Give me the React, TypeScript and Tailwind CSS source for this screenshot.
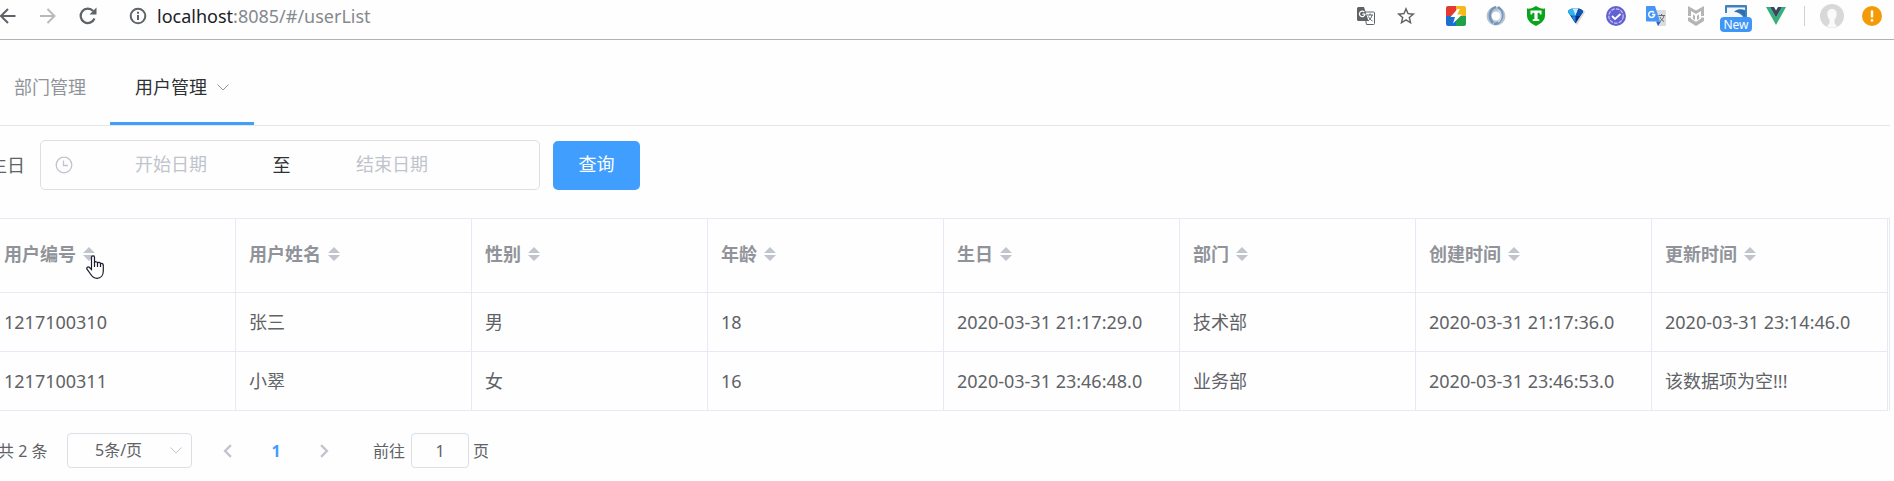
import React from "react";

type User = {
  id: string;
  name: string;
  gender: string;
  age: string;
  birthday: string;
  department: string;
  createdAt: string;
  updatedAt: string;
};

type Column = { key: keyof User; label: string };

const columns: Column[] = [
  { key: "id", label: "用户编号" },
  { key: "name", label: "用户姓名" },
  { key: "gender", label: "性别" },
  { key: "age", label: "年龄" },
  { key: "birthday", label: "生日" },
  { key: "department", label: "部门" },
  { key: "createdAt", label: "创建时间" },
  { key: "updatedAt", label: "更新时间" },
];

const users: User[] = [
  {
    id: "1217100310",
    name: "张三",
    gender: "男",
    age: "18",
    birthday: "2020-03-31 21:17:29.0",
    department: "技术部",
    createdAt: "2020-03-31 21:17:36.0",
    updatedAt: "2020-03-31 23:14:46.0",
  },
  {
    id: "1217100311",
    name: "小翠",
    gender: "女",
    age: "16",
    birthday: "2020-03-31 23:46:48.0",
    department: "业务部",
    createdAt: "2020-03-31 23:46:53.0",
    updatedAt: "该数据项为空!!!",
  },
];

function BarButton({ label, children }: { label: string; children: React.ReactNode }) {
  return (
    <button type="button" aria-label={label} className="flex h-8 w-10 shrink-0 items-center justify-center">
      {children}
    </button>
  );
}

function Chevron({ className, d }: { className: string; d: string }) {
  return (
    <svg viewBox="0 0 12 12" className={className} fill="none" stroke="currentColor">
      <path d={d} />
    </svg>
  );
}

function Extensions() {
  return (
    <div className="ml-auto flex items-center pr-0.5">
      <BarButton label="翻译此页">
        <svg viewBox="0 0 18 18" className="size-[18px]">
          <path d="M7 5h9.500a1 1 0 0 1 1 1v10.500a1 1 0 0 1-1 1H9.500z" fill="#fff" stroke="#5f6368" />
          <path d="M1.500 0H7l1 3 3.500 11H1.500A1.500 1.500 0 0 1 0 12.500v-11A1.500 1.500 0 0 1 1.500 0z" fill="#5f6368" />
          <path d="M7.300 5A2.800 2.800 0 1 0 8 7.200H5.300" fill="none" stroke="#fff" strokeWidth="1.200" />
          <path d="M10 8h6M13 6.500V8M15 8c-.5 2.500-2 4.500-4 6M11.500 9.500c.8 2 2.200 3.500 4 4.500" fill="none" stroke="#5f6368" />
        </svg>
      </BarButton>
      <BarButton label="为此网页添加书签">
        <svg viewBox="1 1 22 22" className="size-5" fill="#5f6368">
          <path d="M22 9.240l-7.190-.62L12 2 9.190 8.630 2 9.240l5.460 4.730L5.820 21 12 17.270 18.180 21l-1.630-7.030L22 9.240zM12 15.400l-3.760 2.270 1-4.280-3.320-2.880 4.380-.38L12 6.100l1.710 4.040 4.380.38-3.320 2.880 1 4.280L12 15.400z" />
        </svg>
      </BarButton>
      <div className="w-2.5" />
      <BarButton label="闪电扩展">
        <svg viewBox="0 0 20 20" className="size-5">
          <path d="M2 0h8v10H0V2a2 2 0 0 1 2-2z" fill="#e23a33" />
          <path d="M10 0h8a2 2 0 0 1 2 2v8H10z" fill="#f7b917" />
          <path d="M0 10h10v10H2a2 2 0 0 1-2-2z" fill="#1b6fd0" />
          <path d="M10 10h10v8a2 2 0 0 1-2 2h-8z" fill="#21a04b" />
          <path d="M11.500 3L4.500 11h4.500l-2 6.500 9-9h-4.800L14 3z" fill="#fff" />
        </svg>
      </BarButton>
      <BarButton label="JSON 查看器">
        <svg viewBox="0 0 20 20" className="size-5" fill="none">
          <circle cx="10" cy="10" r="7" stroke="#b4c5d8" strokeWidth="5" />
          <path d="M10 1C3 3 2 12 7 17M12 1c5 4 6 10 1 15-1 1-3 2-5 2" stroke="#7795b6" strokeWidth="2.500" />
          <path d="M12 4c4 2 4 9 0 12" stroke="#d4dfea" strokeWidth="1.500" />
        </svg>
      </BarButton>
      <BarButton label="盾牌扩展">
        <svg viewBox="0 0 20 20" className="size-5">
          <path d="M1 2.500C4 3 7 2 10 0c3 2 6 3 9 2.500v7c0 5-4 8-9 10.500C5 17.500 1 14.500 1 9.500z" fill="#09a51a" />
          <path d="M4.500 4.500h11v4h-1.300L13.300 6.800H11.600V13l1.700.4V15H6.700v-1.600l1.700-.4V6.800H6.700l-.9 1.700H4.500z" fill="#fff" />
        </svg>
      </BarButton>
      <BarButton label="宝石扩展">
        <svg viewBox="0 0 18 18" className="size-[18px]">
          <path d="M3 8l7 10L18 5l-2-2z" fill="#d4d4d4" />
          <path d="M1 5C1 0 16 0 16 5L8.500 16.500z" fill="#0a2c86" />
          <path d="M1 5c0-2 2-3 4.500-3.500L8.500 9 3.500 8.500z" fill="#27b6f2" />
          <path d="M5.500 1.500c2-.5 4-.5 6 0L8.500 9z" fill="#c2ebfd" />
          <path d="M11.500 1.500C14 2 16 3 16 5l-3 4-4.500 0z" fill="#0d56b8" />
          <path d="M4.500 9.500l4-.5v7z" fill="#168ee0" />
        </svg>
      </BarButton>
      <BarButton label="校验扩展">
        <svg viewBox="0 0 20 20" className="size-5" fill="none">
          <circle cx="10" cy="10" r="10" fill="#6361d2" />
          <circle cx="10" cy="10" r="7.200" stroke="#c5c4f3" strokeWidth="1.200" strokeDasharray="3.600 1.200" />
          <path d="M6 10l3 3 5.500-5" stroke="#fff" strokeWidth="1.800" />
        </svg>
      </BarButton>
      <BarButton label="谷歌翻译">
        <svg viewBox="0 0 20 20" className="size-5">
          <path d="M8 4h11a1 1 0 0 1 1 1v14a1 1 0 0 1-1 1h-7z" fill="#dcdcdc" />
          <path d="M10 15.500h5L12 20z" fill="#2b62c4" />
          <path d="M1 0h8l5 15.500H1a1 1 0 0 1-1-1V1a1 1 0 0 1 1-1z" fill="#4596f7" />
          <path d="M8 6.500A3 3 0 1 0 8.700 8.500H6" fill="none" stroke="#fff" strokeWidth="1.400" />
          <path d="M12.500 9.500H19M15.500 8v1.500M18 9.500c-.5 2.500-2 4.500-4 6M14 11c.8 2 2 3.500 4 4.500" fill="none" stroke="#5f6b78" />
        </svg>
      </BarButton>
      <BarButton label="安全顾问">
        <svg viewBox="0 0 16 20" className="h-5 w-4" fill="#b5b5b8">
          <path d="M0 0l8 4.500L16 0v10h-3V5L8 8 3 5v5H0zM0 11.500h3v1.300l5 3 5-3v-1.300h3V15l-8 5-8-5zM5 8.500l2 1.200V14l-2-1.200zM11 8.500L9 9.700V14l2-1.200z" />
        </svg>
      </BarButton>
      <button type="button" className="flex h-8 w-10 shrink-0 flex-col items-center pt-[5px]">
        <svg viewBox="0 0 22 12" className="h-3 w-[22px] shrink-0">
          <path d="M0 1a1 1 0 0 1 1-1h20a1 1 0 0 1 1 1v11H0z" fill="#3f83bd" />
          <path d="M2 2.500h18V5c-3-1.500-8-1-10 1l-1 1c4 0 7 2 9 5H0V8h2z" fill="#f3f7fa" />
          <path d="M10 6.500c3-2.500 7-2 10-.5v6c-2-3-5-5-10-5.500z" fill="#2b6ea9" />
        </svg>
        <span className="h-[15px] w-8 shrink-0 rounded-sm bg-[#4096f7] text-center text-xs leading-[15px] text-white">
          New
        </span>
      </button>
      <BarButton label="Vue 开发工具">
        <svg viewBox="0 0 20 18" className="h-[18px] w-5">
          <path d="M0 0h4l6 10.500L16 0h4L10 18z" fill="#35b07c" />
          <path d="M4 0h4l2 3.500L12 0h4l-6 10.500z" fill="#35495e" />
        </svg>
      </BarButton>
      <div className="flex w-4 justify-center">
        <div className="h-5 w-px bg-[#cfd1d4]" />
      </div>
      <BarButton label="用户头像">
        <svg viewBox="0 0 24 24" className="size-6">
          <circle cx="12" cy="12" r="12" fill="#d8d8d8" />
          <path
            d="M12 5c-3.500 0-5 2.500-4.700 5.500.2 2.500 1.200 4 2.200 5v3.500L7 22.500c3 1.500 7 1.500 10 0L14.500 19v-3.500c1-1 2-2.500 2.200-5C17 7.500 15.500 5 12 5z"
            fill="#fafafa"
          />
        </svg>
      </BarButton>
      <BarButton label="更新提示">
        <svg viewBox="0 0 20 20" className="size-5">
          <circle cx="10" cy="10" r="10" fill="#f39a06" />
          <path d="M8.800 4.500h2.400v7H8.800zM8.800 13.200h2.400v2.400H8.800z" fill="#fff" />
        </svg>
      </BarButton>
    </div>
  );
}

function BrowserBar() {
  return (
    <header className="flex h-10 items-start border-b border-[#b2b2b2]">
      <div className="flex h-[31px] items-center text-[#5f6368]">
        <button type="button" aria-label="后退">
          <svg viewBox="0 0 16 16" className="size-4" fill="none" stroke="currentColor" strokeWidth="2">
            <path d="M15.500 8H1M8 1L1 8l7 7" />
          </svg>
        </button>
        <button type="button" aria-label="前进" className="ml-6 text-[#b8babd]">
          <svg viewBox="0 0 16 16" className="size-4" fill="none" stroke="currentColor" strokeWidth="2">
            <path d="M0 8h14.500M7.500 1l7 7-7 7" />
          </svg>
        </button>
        <button type="button" aria-label="重新加载" className="ml-[22px]">
          <svg viewBox="0 0 20 20" className="size-5" fill="none" stroke="currentColor" strokeWidth="2.200">
            <path d="M16.500 12.500A7.200 7.200 0 1 1 15.200 5" />
            <path d="M18.500 1.500v7h-7z" fill="currentColor" stroke="none" />
          </svg>
        </button>
        <button type="button" aria-label="查看网站信息" className="ml-[31px]">
          <svg viewBox="0 0 18 18" className="size-[18px]" fill="none" stroke="currentColor" strokeWidth="2">
            <circle cx="9" cy="9" r="7.300" />
            <path d="M9 8v5M9 4.800v2" />
          </svg>
        </button>
        <p className="ml-2.5 text-lg text-[#85898d]">
          <span className="text-[#202124]">localhost</span>:8085/#/userList
        </p>
      </div>
      <Extensions />
    </header>
  );
}

function NavTabs() {
  return (
    <nav className="mr-1 flex h-[86px] border-b border-[#e6e6e6] text-lg">
      <a href="#/deptList" className="flex items-center pt-2 pr-6 pl-[14px] text-[#909399]">
        部门管理
      </a>
      <a
        href="#/userList"
        aria-current="page"
        className="flex items-center gap-2.5 border-b-[3px] border-[#409eff] px-[25px] pt-3 text-[#303133]"
      >
        用户管理
        <Chevron className="size-3 text-[#909399]" d="M0.500 3.500L6 9l5.500-5.500" />
      </a>
    </nav>
  );
}

function SearchForm() {
  return (
    <form className="mt-[14px] flex items-center text-lg" onSubmit={(e) => e.preventDefault()}>
      <label htmlFor="birthday-start" className="-ml-[11px] w-[51px] shrink-0 text-[#606266]">
        生日
      </label>
      <div className="flex h-[50px] w-[500px] items-center rounded-[5px] border border-[#dcdfe6] pl-[14px]">
        <svg viewBox="0 0 18 18" className="size-[18px] shrink-0" fill="none" stroke="#c0c4cc" strokeWidth="1.300">
          <circle cx="9" cy="9" r="7.800" />
          <path d="M8.500 4.500v5H13" />
        </svg>
        <input
          id="birthday-start"
          placeholder="开始日期"
          className="w-[196px] pb-0.5 text-center outline-none placeholder:text-[#c0c4cc]"
        />
        <span className="w-[25px] text-center text-[#303133]">至</span>
        <input
          aria-label="结束日期"
          placeholder="结束日期"
          className="w-[196px] pb-0.5 text-center outline-none placeholder:text-[#c0c4cc]"
        />
      </div>
      <button type="submit" className="ml-[13px] h-[49px] w-[87px] rounded-[5px] bg-[#409eff] pb-0.5 text-white">
        查询
      </button>
    </form>
  );
}

function HandCursor() {
  return (
    <svg viewBox="0 0 18 24" className="pointer-events-none absolute top-2 left-1 h-6 w-[18px]">
      <path
        d="M5.500 14.500V2.200C5.500.3 8.500.3 8.500 2.200V7.500C9 6.300 11.300 6.500 11.500 8 12.300 6.900 14.300 7.300 14.500 8.700 15.500 8 17.300 8.600 17.300 10.200V16C17.300 20 15 23.300 11 23.300 7.500 23.300 6 21.500 4.500 19L1 14.200C.2 12.600 2 11.300 3.300 12.300z"
        fill="#fff"
        stroke="#1b1b2f"
        strokeWidth="1.200"
      />
      <path d="M8.500 7v5M11.500 8v4M14.500 9v3" fill="none" stroke="#1b1b2f" strokeWidth="1.200" />
    </svg>
  );
}

function UserTable() {
  return (
    <div className="mt-7 mr-1 border-t border-r border-[#e6eaf5] pr-px">
      <table className="w-full table-fixed border-separate border-spacing-0 text-left text-lg">
        <thead className="text-[#909399]">
          <tr>
            {columns.map((column, index) => (
              <th
                key={column.key}
                className="h-[74px] border-r border-b border-[#e6eaf5] pr-3 pb-1 pl-[13px] font-bold first:pl-1"
              >
                <button type="button" className="flex items-center gap-1.5">
                  {column.label}
                  <span className="relative">
                    <svg viewBox="0 0 14 14" className="size-[14px]" fill="#c0c4cc">
                      <path d="M7 0l6 6H1zM7 14l6-6H1z" />
                    </svg>
                    {index === 0 && <HandCursor />}
                  </span>
                </button>
              </th>
            ))}
          </tr>
        </thead>
        <tbody className="text-[#606266]">
          {users.map((user) => (
            <tr key={user.id}>
              {columns.map((column) => (
                <td
                  key={column.key}
                  className="h-[59px] border-r border-b border-[#e6eaf5] pl-[13px] whitespace-nowrap first:pl-1"
                >
                  {user[column.key]}
                </td>
              ))}
            </tr>
          ))}
        </tbody>
      </table>
    </div>
  );
}

function Pagination() {
  return (
    <div className="mt-[22px] flex h-[35px] items-center text-base text-[#606266]">
      <span className="-ml-0.5 w-[69px] shrink-0 whitespace-nowrap">共 2 条</span>
      <div className="relative">
        <select
          aria-label="每页条数"
          defaultValue="5"
          className="h-[35px] w-[125px] appearance-none rounded-[4px] border border-[#dcdfe6] bg-transparent pb-0.5 pl-[27px]"
        >
          <option value="5">5条/页</option>
          <option value="10">10条/页</option>
        </select>
        <Chevron
          className="pointer-events-none absolute top-[11px] right-2.5 size-3 text-[#c0c4cc]"
          d="M0.500 3.500L6 9l5.500-5.500"
        />
      </div>
      <button type="button" aria-label="上一页" className="ml-3 flex h-8 w-12 items-center justify-center">
        <Chevron className="size-[14px] stroke-2 text-[#c0c4cc]" d="M8.500 1L3.500 6l5 5" />
      </button>
      <button type="button" aria-current="page" className="h-8 w-12 font-bold text-[#409eff]">
        1
      </button>
      <button type="button" aria-label="下一页" className="flex h-8 w-12 items-center justify-center">
        <Chevron className="size-[14px] stroke-2 text-[#c0c4cc]" d="M3.500 1l5 5-5 5" />
      </button>
      <label htmlFor="page-number" className="ml-[25px] w-[38px] whitespace-nowrap">
        前往
      </label>
      <input
        id="page-number"
        defaultValue="1"
        className="h-[35px] w-[58px] rounded-[4px] border border-[#dcdfe6] text-center outline-none"
      />
      <span className="ml-1">页</span>
    </div>
  );
}

export default function App() {
  return (
    <div className="min-h-screen overflow-hidden bg-[#fefefe] font-['Noto_Sans','Noto_Sans_CJK_SC',sans-serif]">
      <BrowserBar />
      <main>
        <NavTabs />
        <SearchForm />
        <UserTable />
        <Pagination />
      </main>
    </div>
  );
}
